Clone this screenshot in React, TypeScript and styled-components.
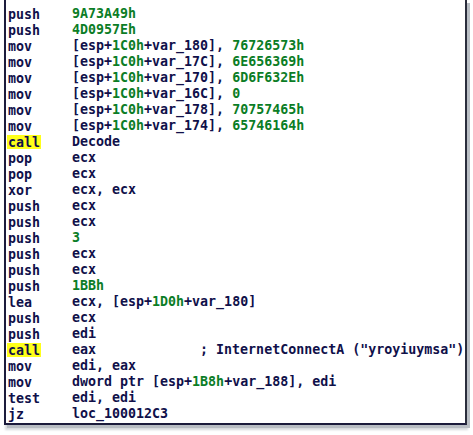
import React from "react";
import styled, { createGlobalStyle } from "styled-components";

const Global = createGlobalStyle`
  html, body { margin: 0; padding: 0; background: #ffffff; }
  body { width: 473px; height: 435px; overflow: hidden; }
`;

const Frame = styled.div`
  margin: 0 0 0 4px;
  width: 457px;
  padding: 6px 0 1px 2px;
  border-left: 2px solid #1c1c3c;
  border-right: 2px solid #2a2d3c;
  border-bottom: 2px solid #1c1c3c;
  box-shadow: 3px 3px 0 #b9bec4, 1px 5px 2px #d7dadd;
  background: #ffffff;
`;

const Row = styled.div`
  display: grid;
  grid-template-columns: 64px 1fr;
  height: 16px;
  line-height: 16px;
  font-family: "DejaVu Sans Mono", "Liberation Mono", monospace;
  font-weight: bold;
  font-size: 13.3px;
  color: #10104a;
  white-space: pre;
`;

const Mnemonic = styled.span<{ $hl?: boolean }>`
  justify-self: start;
  background: ${(p) => (p.$hl ? "#ffff1a" : "transparent")};
  padding: 0 1px 0 1px;
  margin-left: -1px;
  height: 14px;
  line-height: 15px;
  align-self: center;
`;

const Num = styled.span`
  color: #0b7d26;
`;

type Part = string | { n: string };
type Line = { m: string; hl?: boolean; ops: Part[] };

const lines: Line[] = [
  { m: "push", ops: [{ n: "9A73A49h" }] },
  { m: "push", ops: [{ n: "4D0957Eh" }] },
  { m: "mov", ops: ["[esp+", { n: "1C0h" }, "+var_180], ", { n: "76726573h" }] },
  { m: "mov", ops: ["[esp+", { n: "1C0h" }, "+var_17C], ", { n: "6E656369h" }] },
  { m: "mov", ops: ["[esp+", { n: "1C0h" }, "+var_170], ", { n: "6D6F632Eh" }] },
  { m: "mov", ops: ["[esp+", { n: "1C0h" }, "+var_16C], ", { n: "0" }] },
  { m: "mov", ops: ["[esp+", { n: "1C0h" }, "+var_178], ", { n: "70757465h" }] },
  { m: "mov", ops: ["[esp+", { n: "1C0h" }, "+var_174], ", { n: "65746164h" }] },
  { m: "call", hl: true, ops: ["Decode"] },
  { m: "pop", ops: ["ecx"] },
  { m: "pop", ops: ["ecx"] },
  { m: "xor", ops: ["ecx, ecx"] },
  { m: "push", ops: ["ecx"] },
  { m: "push", ops: ["ecx"] },
  { m: "push", ops: [{ n: "3" }] },
  { m: "push", ops: ["ecx"] },
  { m: "push", ops: ["ecx"] },
  { m: "push", ops: [{ n: "1BBh" }] },
  { m: "lea", ops: ["ecx, [esp+", { n: "1D0h" }, "+var_180]"] },
  { m: "push", ops: ["ecx"] },
  { m: "push", ops: ["edi"] },
  { m: "call", hl: true, ops: ["eax             ; InternetConnectA (\"yroyiuymsa\")"] },
  { m: "mov", ops: ["edi, eax"] },
  { m: "mov", ops: ["dword ptr [esp+", { n: "1B8h" }, "+var_188], edi"] },
  { m: "test", ops: ["edi, edi"] },
  { m: "jz", ops: ["loc_100012C3"] },
];

export default function App() {
  return (
    <>
      <Global />
      <Frame>
        {lines.map((l, i) => (
          <Row key={i}>
            <Mnemonic $hl={l.hl}>{l.m}</Mnemonic>
            <span>
              {l.ops.map((p, j) =>
                typeof p === "string" ? <React.Fragment key={j}>{p}</React.Fragment> : <Num key={j}>{p.n}</Num>
              )}
            </span>
          </Row>
        ))}
      </Frame>
    </>
  );
}
